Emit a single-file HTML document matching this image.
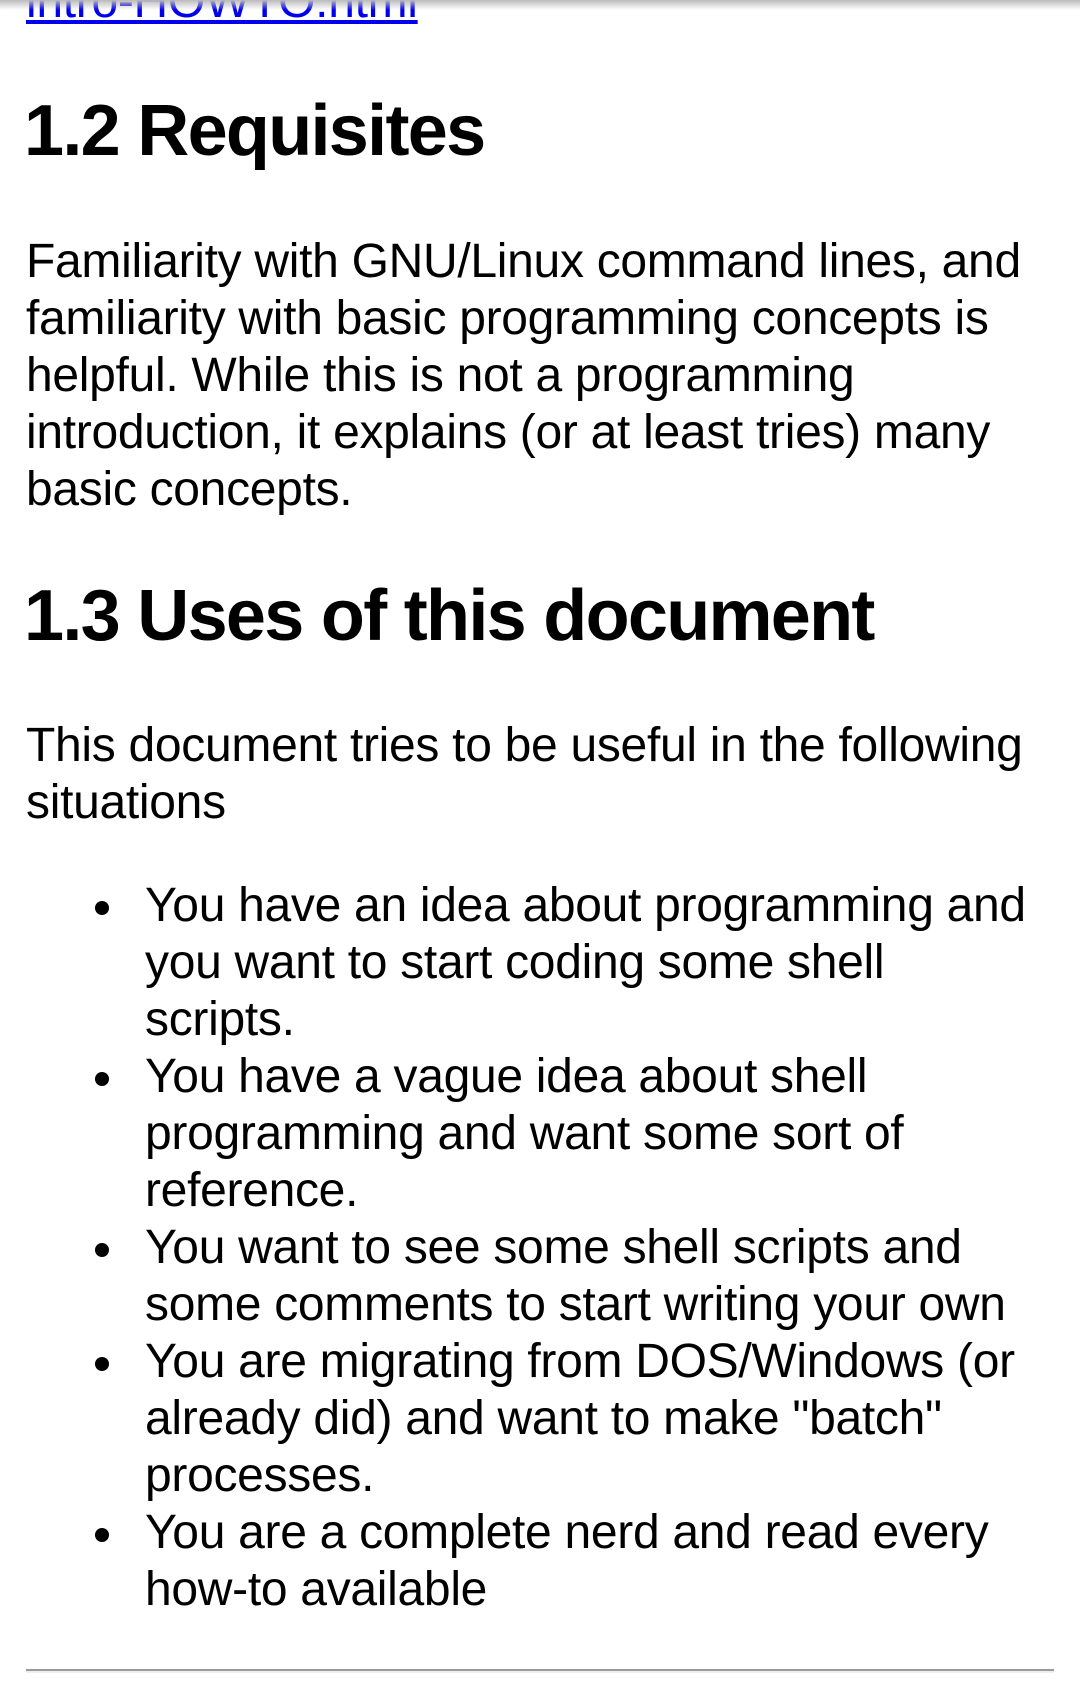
<!DOCTYPE html>
<html><head><meta charset="utf-8"><style>
html,body{margin:0;padding:0;background:#fff;width:1080px;height:1699px;overflow:hidden;position:relative}
.l{position:absolute;left:26px;margin-top:4px;font:48px/57px "Liberation Sans",Arial,sans-serif;color:#000;white-space:nowrap;letter-spacing:-0.3px}
.h{position:absolute;left:24px;font:bold 72px/90px "Liberation Sans",Arial,sans-serif;color:#000;white-space:nowrap;letter-spacing:-1.7px}
.li{left:145px}
.b{position:absolute;left:95px;width:14px;height:14px;border-radius:50%;background:#000}
a{color:#0000ee;text-decoration:underline}
.sh{position:absolute;left:0;top:0;width:1080px;height:10px;background:linear-gradient(#bbb,rgba(255,255,255,0))}
.hr{position:absolute;left:26px;top:1669px;width:1028px;height:2px;background:#9a9a9a;border-bottom:2px solid #eee}
</style></head><body>
<div class="l" style="top:-31px"><a>intro-HOWTO.html</a></div>
<div class="sh"></div>
<div class="h" style="top:86px">1.2 Requisites</div>
<div class="l" style="top:229px">Familiarity with GNU/Linux command lines, and</div>
<div class="l" style="top:286px">familiarity with basic programming concepts is</div>
<div class="l" style="top:343px">helpful. While this is not a programming</div>
<div class="l" style="top:400px">introduction, it explains (or at least tries) many</div>
<div class="l" style="top:457px">basic concepts.</div>
<div class="h" style="top:571px">1.3 Uses of this document</div>
<div class="l" style="top:713px">This document tries to be useful in the following</div>
<div class="l" style="top:770px">situations</div>

<div class="b" style="top:901px"></div>
<div class="l li" style="top:873px">You have an idea about programming and</div>
<div class="l li" style="top:930px">you want to start coding some shell</div>
<div class="l li" style="top:987px">scripts.</div>
<div class="b" style="top:1072px"></div>
<div class="l li" style="top:1044px">You have a vague idea about shell</div>
<div class="l li" style="top:1101px">programming and want some sort of</div>
<div class="l li" style="top:1158px">reference.</div>
<div class="b" style="top:1243px"></div>
<div class="l li" style="top:1215px">You want to see some shell scripts and</div>
<div class="l li" style="top:1272px">some comments to start writing your own</div>
<div class="b" style="top:1357px"></div>
<div class="l li" style="top:1329px">You are migrating from DOS/Windows (or</div>
<div class="l li" style="top:1386px">already did) and want to make "batch"</div>
<div class="l li" style="top:1443px">processes.</div>
<div class="b" style="top:1528px"></div>
<div class="l li" style="top:1500px">You are a complete nerd and read every</div>
<div class="l li" style="top:1557px">how-to available</div>
<div class="hr"></div>
</body></html>
